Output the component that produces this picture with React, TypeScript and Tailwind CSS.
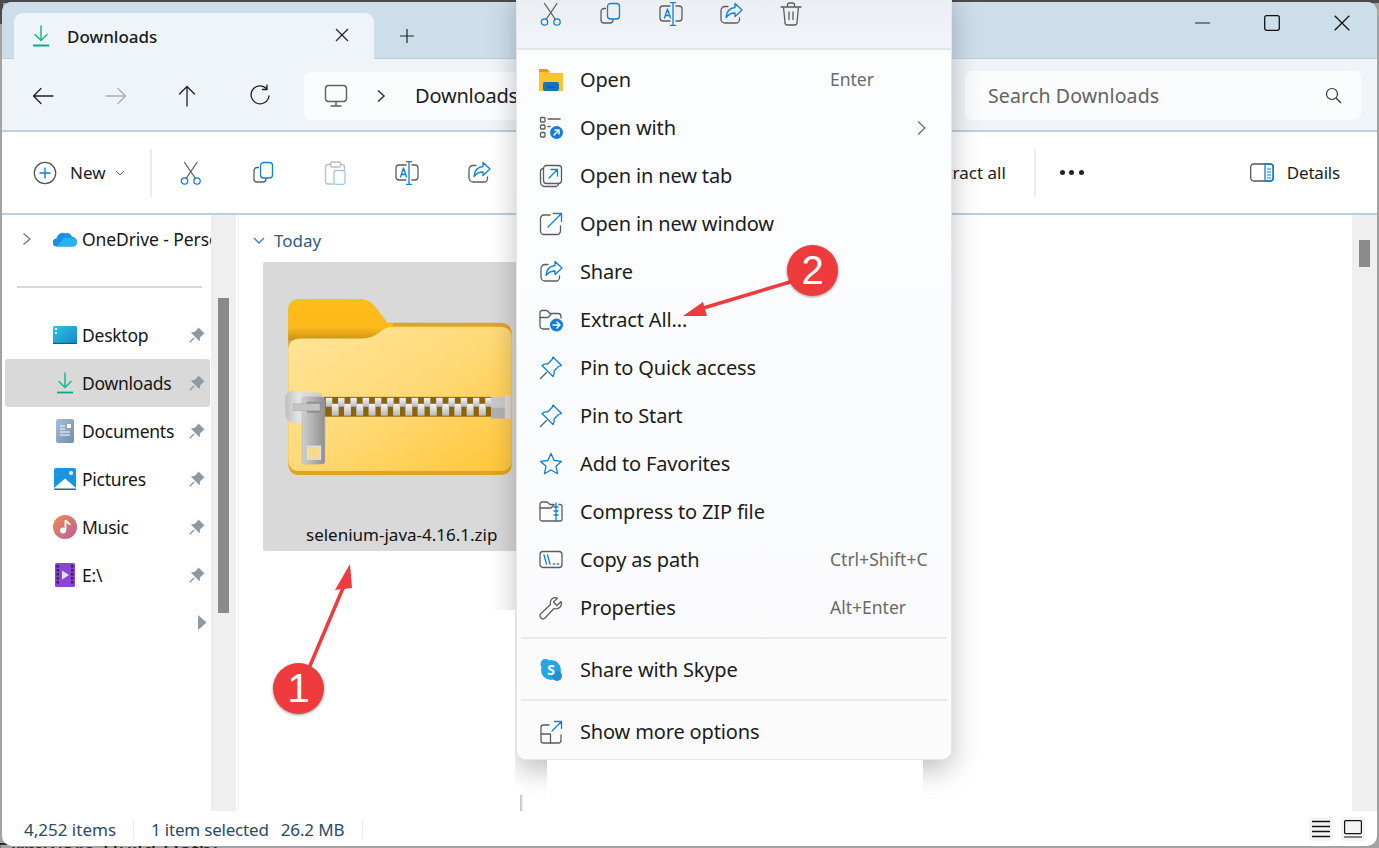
import React from "react";

const FONT = "font-['Noto_Sans','Open_Sans',sans-serif]";
const B = "#0f7fd8";
const G = "#5c5c5c";

function I({ children, s = 24, className = "" }: { children: React.ReactNode; s?: number; className?: string }) {
  return (
    <svg width={s} height={s} viewBox="0 0 24 24" fill="none" strokeWidth={1.3} strokeLinecap="round" strokeLinejoin="round" className={"shrink-0 " + className}>
      {children}
    </svg>
  );
}

const Cut = () => (
  <I>
    <circle cx="5.500" cy="20" r="3.200" stroke={B} />
    <circle cx="18" cy="20" r="3.200" stroke={B} />
    <path d="M7 17.500 18 1.500M16.500 17.500 5.500 1.500" stroke={G} />
  </I>
);
const Copy = () => (
  <I>
    <path d="M6.500 6.500H5A3 3 0 0 0 2 9.500V18a3 3 0 0 0 3 3h6a3 3 0 0 0 3-3v-.5" stroke={G} />
    <rect x="8.500" y="1.500" width="12" height="15.500" rx="3" stroke={B} />
  </I>
);
const Rename = () => (
  <I>
    <path d="M11 4H4a3 3 0 0 0-3 3v9a3 3 0 0 0 3 3h7M17 4h3a3 3 0 0 1 3 3v9a3 3 0 0 1-3 3h-3" stroke={G} />
    <path d="M11.500 .5h5M14 .5v23M11.500 23.500h5M5.500 16l3-9 3 9M6.500 13.500h4" stroke={B} />
  </I>
);
const Share = () => (
  <I>
    <path d="M9 4.500H6a4 4 0 0 0-4 4V17a4 4 0 0 0 4 4h11a3.500 3.500 0 0 0 3.500-3.500V16" stroke={G} />
    <path d="M16 1.500 23 8l-7 6.500V11c-4 0-6.500 1-9 4.500C7.500 10 10.500 6 16 5.500z" stroke={B} />
  </I>
);
const Trash = () => (
  <I>
    <path d="M2 5h20M8.500 5V3a2 2 0 0 1 2-2h3a2 2 0 0 1 2 2v2M4.500 5l1.500 15.500A2.500 2.500 0 0 0 8.500 23h7a2.500 2.500 0 0 0 2.500-2.500L19.500 5M10 10v7.500M14 10v7.500" stroke={G} />
  </I>
);
const Paste = () => (
  <I className="opacity-40">
    <path d="M7 3.500H4A2.500 2.500 0 0 0 1.500 6v14.500A2.500 2.500 0 0 0 4 23h5" stroke={G} />
    <rect x="6.500" y="1" width="10" height="5" rx="1.500" stroke={G} />
    <path d="M17 3.500h1a2.500 2.500 0 0 1 2.500 2.500v3" stroke={G} />
    <rect x="10" y="9.500" width="11" height="14" rx="2.500" stroke={B} />
  </I>
);
const Pin = () => (
  <I>
    <path d="M14 2 22.500 10.500 19.500 11.500 15 16c.5 2 .2 4-1 5.500L3 10.500C4.500 9 6.500 8.500 8.500 9L13 4.500z" stroke={B} transform="translate(0 -1)" />
    <path d="M7.500 16.500 1.500 22.500" stroke={G} />
  </I>
);

function Arrow({ d, dim }: { d: string; dim?: boolean }) {
  return (
    <svg width="24" height="24" viewBox="0 0 24 24" fill="none" stroke={dim ? "#a9adb1" : "#1f1f1f"} strokeWidth="1.300" strokeLinecap="round" strokeLinejoin="round" className="shrink-0">
      <path d={d} />
    </svg>
  );
}

function PinGray() {
  return (
    <svg width="16" height="16" viewBox="0 0 16 16" fill="#8d9aa5" className="shrink-0">
      <path d="M9.500 .5 15.500 6.500 14 7.500 11 10.500c.3 1.300 0 2.500-.8 3.500L2 5.800C3 5 4.200 4.700 5.500 5L8.500 2z" />
      <path d="M5 11 .8 15.200" stroke="#8d9aa5" strokeWidth="1.400" />
    </svg>
  );
}

const DownloadIcon = () => (
  <svg width="18" height="22" viewBox="0 0 18 22" fill="none" className="shrink-0">
    <path d="M9 1v14M3 9.500l6 6 6-6" stroke="#1fb58f" strokeWidth="1.500" strokeLinecap="round" strokeLinejoin="round" />
    <path d="M1 20.500h16" stroke="#12a68a" strokeWidth="1.800" />
  </svg>
);

function SideItem({ label, icon, active }: { label: string; icon: React.ReactNode; active?: boolean }) {
  return (
    <div className={"flex items-center h-[48px] ml-[3px] mr-[1px] pl-[48px] pr-[5px] rounded-[3px] " + (active ? "bg-[#d9d9d9]" : "")}>
      <div className="w-[24px] flex justify-center mr-[5px]">{icon}</div>
      <span className="flex-1 text-[17.500px] text-[#161616] tracking-[-0.25px]">{label}</span>
      <PinGray />
    </div>
  );
}

const DesktopIcon = () => (
  <svg width="24" height="18" viewBox="0 0 24 18" className="shrink-0">
    <defs>
      <linearGradient id="dk" x1="0" y1="0" x2="1" y2="1">
        <stop offset="0" stopColor="#2fc3de" />
        <stop offset="1" stopColor="#1787c9" />
      </linearGradient>
    </defs>
    <rect width="24" height="18" rx="1.500" fill="url(#dk)" />
    <rect x="0" y="16.800" width="24" height="1.200" fill="#0d5e95" />
    <rect x="2" y="2" width="2" height="2" fill="#fff" />
    <rect x="2" y="6" width="2" height="2" fill="#bdeefc" />
  </svg>
);
const DocIcon = () => (
  <svg width="18" height="24" viewBox="0 0 18 24" className="shrink-0">
    <defs>
      <linearGradient id="dc" x1="0" y1="0" x2="1" y2="1">
        <stop offset="0" stopColor="#a8c0da" />
        <stop offset="1" stopColor="#6f8cab" />
      </linearGradient>
    </defs>
    <rect width="18" height="24" rx="2" fill="url(#dc)" />
    <path d="M4 7h5M4 10h5M4 13h10M4 16h10" stroke="#fff" strokeWidth="1.100" />
    <rect x="11" y="5" width="4" height="4" fill="#fff" />
  </svg>
);
const PicIcon = () => (
  <svg width="22" height="22" viewBox="0 0 22 22" className="shrink-0">
    <rect width="22" height="22" rx="2" fill="#1a94e0" />
    <circle cx="17" cy="5" r="2" fill="#fff" />
    <path d="M0 20 11 10.500 22 20v.5a1.500 1.500 0 0 1-1.500 1.500h-19A1.500 1.500 0 0 1 0 20.500z" fill="#fff" />
    <path d="M0 20.500h22V21a1 1 0 0 1-1 1H1a1 1 0 0 1-1-1z" fill="#0f6cb8" />
  </svg>
);
const MusicIcon = () => (
  <svg width="24" height="24" viewBox="0 0 24 24" className="shrink-0">
    <defs>
      <linearGradient id="mu" x1="0" y1="0" x2="1" y2="1">
        <stop offset="0" stopColor="#f08b4d" />
        <stop offset="1" stopColor="#b85f9f" />
      </linearGradient>
    </defs>
    <circle cx="12" cy="12" r="12" fill="url(#mu)" />
    <path d="M12.500 5v10" stroke="#fff" strokeWidth="1.800" />
    <circle cx="10" cy="15.500" r="3" fill="#fff" />
    <path d="M12.500 5c1 2.500 3.500 2.500 4.500 5" stroke="#fff" strokeWidth="1.800" fill="none" />
  </svg>
);
const VideoIcon = () => (
  <svg width="20" height="24" viewBox="0 0 20 24" className="shrink-0">
    <rect width="20" height="24" rx="1.500" fill="#8b45d6" />
    <path d="M7 7.500v9l7-4.500z" fill="#eadcfb" />
    {[2, 6, 10, 14, 18].map((y) => (
      <g key={y}>
        <rect x="1.500" y={y} width="2.500" height="2.500" fill="#3b1a70" />
        <rect x="16" y={y} width="2.500" height="2.500" fill="#3b1a70" />
      </g>
    ))}
  </svg>
);

function Zip() {
  const top: number[] = [];
  for (let i = 0; i < 14; i++) top.push(i);
  return (
    <svg width="224" height="176" viewBox="0 0 226 178" className="block shrink-0 overflow-visible">
      <defs>
        <linearGradient id="fb" x1="0" y1="0" x2="1" y2="1">
          <stop offset="0" stopColor="#ffe59a" />
          <stop offset="0.5" stopColor="#ffd976" />
          <stop offset="1" stopColor="#ffc636" />
        </linearGradient>
        <linearGradient id="tb" x1="0" y1="0" x2="0" y2="1">
          <stop offset="0" stopColor="#ffbf1c" />
          <stop offset="0.7" stopColor="#fbb81a" />
          <stop offset="1" stopColor="#c98f14" />
        </linearGradient>
        <linearGradient id="sl" x1="0" y1="0" x2="1" y2="0">
          <stop offset="0" stopColor="#cfcfcf" />
          <stop offset="1" stopColor="#8f8f8f" />
        </linearGradient>
        <linearGradient id="tl" x1="0" y1="0" x2="1" y2="0">
          <stop offset="0" stopColor="#bdbdbd" />
          <stop offset="0.35" stopColor="#e4e4e4" />
          <stop offset="1" stopColor="#c9c9c9" />
        </linearGradient>
        <linearGradient id="tt" x1="0" y1="0" x2="0" y2="1">
          <stop offset="0" stopColor="#f5f5f5" />
          <stop offset="1" stopColor="#b9b9b9" />
        </linearGradient>
      </defs>
      <path d="M0 12Q0 0 12 0H71Q82 0 88 8L100 24H214Q226 24 226 36V166Q226 178 214 178H12Q0 178 0 166Z" fill="#e2a327" />
      <path d="M0 12Q0 0 12 0H71Q82 0 88 8L100 24H106V42H0Z" fill="url(#tb)" />
      <path d="M0 52Q0 40 12 40H75Q84 40 92 34Q98 28 106 28H214Q226 28 226 40V162Q226 174 214 174H12Q0 174 0 162Z" fill="url(#fb)" />
      <rect x="36" y="99" width="170" height="20" fill="#8a6408" />
      {top.map((i) => (
        <rect key={"b" + i} x={44 + i * 12.400} y="106" width="7" height="12" fill="url(#tt)" />
      ))}
      {top.map((i) => (
        <rect key={"t" + i} x={38 + i * 12.400} y="100" width="6.500" height="9" fill="url(#tt)" />
      ))}
      <rect x="205" y="99" width="16" height="11" fill="#c9c9c9" />
      <rect x="205" y="110" width="16" height="11" fill="#b2b2b2" />
      <rect x="219" y="97" width="6" height="24" fill="#d9d9d9" />
      <path d="M-3 99Q-2 94 4 93L34 95V122L6 126Q-3 124 -3 116Z" fill="url(#tl)" />
      <rect x="14" y="99" width="23" height="68" rx="3" fill="url(#sl)" stroke="#a8a8a8" strokeWidth=".5" />
      <rect x="19" y="104" width="14" height="11" fill="#8e8e8e" />
      <rect x="5" y="106" width="27" height="7" fill="#c4c4c4" stroke="#aaa" strokeWidth=".5" />
      <rect x="19.500" y="149" width="13" height="13" fill="#f6d98a" stroke="#dedede" strokeWidth="1.500" />
    </svg>
  );
}

function MenuRow({ icon, label, hint, chev }: { icon: React.ReactNode; label: string; hint?: string; chev?: boolean }) {
  return (
    <div className="flex items-center h-[48px] pl-[22px] pr-[21px]">
      <div className="w-[24px] flex justify-center mr-[17px]">{icon}</div>
      <span className="flex-1 text-[20px] text-[#1c1c1c] tracking-[-0.15px]">{label}</span>
      {hint && <span className="text-[17.500px] text-[#6a6a6a] w-[100px] whitespace-nowrap pb-[2px]">{hint}</span>}
      {chev && (
        <svg width="12" height="16" viewBox="0 0 12 16" fill="none" stroke="#6a6a6a" strokeWidth="1.200" className="mr-[3px]">
          <path d="M3 1.500 10 8l-7 6.500" />
        </svg>
      )}
    </div>
  );
}

function ContextMenu() {
  return (
    <div className="absolute left-[516px] top-[-14px] w-[436px] h-[774px] rounded-[10px] bg-[#fbfcfe] border border-[#e4e6e9] shadow-[0_10px_28px_rgba(0,0,0,0.25)] overflow-hidden">
      <div className="h-[63px] bg-gradient-to-b from-[#e9edf1] to-[#f1f4f8] border-b-[2px] border-[#e4e7ea] flex items-start pt-[15px] pl-[22px] gap-[36px]">
        <Cut />
        <Copy />
        <Rename />
        <Share />
        <Trash />
      </div>
      <div className="h-[709px] pt-[6px] bg-gradient-to-b from-[#fbfdff] to-[#fbfbfc]">
        <MenuRow label="Open" hint="Enter" icon={
          <svg width="24" height="22" viewBox="0 0 24 22">
            <path d="M0 1h9l2 3h13v18H0z" fill="#fdc52b" />
            <path d="M0 0h8l3 3H0z" fill="#e09c14" />
            <rect x="4" y="13" width="16" height="9" rx="2" fill="#1075c5" />
            <path d="M8 18h8" stroke="#0a4d8c" strokeWidth="1" />
          </svg>
        } />
        <MenuRow label="Open with" chev icon={
          <I>
            <rect x="1.500" y="1.500" width="4.500" height="4.500" rx="1" stroke={G} />
            <rect x="1.500" y="9" width="4.500" height="4" rx="1" stroke={G} />
            <rect x="1.500" y="16.500" width="4.500" height="4.500" rx="1" stroke={G} />
            <path d="M9 3h12M9 10.500h2" stroke={G} />
            <circle cx="17.500" cy="16.500" r="6.500" fill={B} />
            <path d="M15 19l5-5M16 14h4v4" stroke="#fff" strokeWidth="1.500" />
          </I>
        } />
        <MenuRow label="Open in new tab" icon={
          <I>
            <path d="M4 4.500a3 3 0 0 0-2.500 3V18A4.500 4.500 0 0 0 6 22.500h10.500a3 3 0 0 0 3-2.500" stroke={G} />
            <rect x="4.500" y="1.500" width="18" height="18" rx="3" stroke={G} />
            <path d="M10 14l8-8M12 5.500h6.500V12" stroke={B} />
          </I>
        } />
        <MenuRow label="Open in new window" icon={
          <I>
            <path d="M11 3H5a3.500 3.500 0 0 0-3.500 3.500V19A3.500 3.500 0 0 0 5 22.500h13a3.500 3.500 0 0 0 3.500-3.500V14" stroke={G} />
            <path d="M9 15 22 2M14.500 1.500H22.500V9.500" stroke={B} />
          </I>
        } />
        <MenuRow label="Share" icon={<Share />} />
        <MenuRow label="Extract All..." icon={
          <I>
            <path d="M10 21H4a3 3 0 0 1-3-3V4.500a2 2 0 0 1 2-2h5l3 3h8a3 3 0 0 1 3 3V10" stroke={G} />
            <path d="M1 9.500h8l3-3" stroke={G} />
            <circle cx="17.500" cy="17" r="6.500" fill={B} />
            <path d="M14 17h7M18 14l3 3-3 3" stroke="#fff" strokeWidth="1.500" />
          </I>
        } />
        <MenuRow label="Pin to Quick access" icon={<Pin />} />
        <MenuRow label="Pin to Start" icon={<Pin />} />
        <MenuRow label="Add to Favorites" icon={
          <I>
            <path d="M12 1.500l3.200 7 7.300.8-5.500 5 1.600 7.400L12 18l-6.600 3.700L7 14.300l-5.500-5 7.300-.8z" stroke={B} />
          </I>
        } />
        <MenuRow label="Compress to ZIP file" icon={
          <I>
            <path d="M20 4.500h1a2 2 0 0 1 2 2V19a2 2 0 0 1-2 2H3a2 2 0 0 1-2-2V4a2 2 0 0 1 2-2h5l3 2.500h4" stroke={G} />
            <path d="M1 8h11l3-3" stroke={G} />
            <path d="M17 3v18M15 7h4M15 11h4M15 15h4" stroke={B} />
          </I>
        } />
        <MenuRow label="Copy as path" hint="Ctrl+Shift+C" icon={
          <I>
            <rect x="1" y="3.500" width="22" height="16" rx="3" stroke={G} />
            <path d="M5 7l2.500 9M8.500 7l2.500 9" stroke={B} />
            <path d="M14.500 16h1M18.500 16h1" stroke={B} strokeWidth="1.600" />
          </I>
        } />
        <MenuRow label="Properties" hint="Alt+Enter" icon={
          <I>
            <path d="M22 5.500 18 9.500 14.500 6 18.500 2C14.500 .5 10.500 3.500 11.500 8.500L2 17.500A2.800 2.800 0 0 0 6 22l9-9.500C20 14 23.500 10 22 5.500Z" stroke={G} />
          </I>
        } />
        <div className="h-[2px] bg-[#e9eaeb] mx-[4px] mt-[5px]" />
        <div className="pt-[7px]">
          <MenuRow label="Share with Skype" icon={
            <svg width="24" height="24" viewBox="0 0 24 24">
              <circle cx="12" cy="12" r="10" fill="#25a5e2" />
              <circle cx="6.500" cy="6" r="5" fill="#25a5e2" />
              <circle cx="18" cy="18" r="5" fill="#1f8fd0" />
              <text x="12" y="17" textAnchor="middle" fontSize="14" fontWeight="700" fill="#fff" fontFamily="Noto Sans">S</text>
            </svg>
          } />
        </div>
        <div className="h-[2px] bg-[#e9eaeb] mx-[4px] mt-[5px]" />
        <div className="pt-[7px]">
          <MenuRow label="Show more options" icon={
            <I>
              <path d="M10 5H4.500A2.500 2.500 0 0 0 2 7.500v13A2.500 2.500 0 0 0 4.500 23h15a2.500 2.500 0 0 0 2.500-2.500V15" stroke={G} />
              <path d="M2 14h9.500v9" stroke={G} />
              <path d="M13 11 22 2M15.500 1.500h7v7" stroke={B} />
            </I>
          } />
        </div>
      </div>
    </div>
  );
}

function Callout({ n, className }: { n: string; className: string }) {
  return (
    <div className={"absolute w-[51px] h-[51px] rounded-full bg-[#ef3b3e] shadow-[0_1px_3px_rgba(0,0,0,0.4)] text-white text-[40px] font-medium leading-[51px] text-center font-['Liberation_Sans',sans-serif] " + className}>
      {n}
    </div>
  );
}

export default function App() {
  return (
    <div className={"relative w-[1379px] h-[848px] overflow-hidden bg-[#a3a3a3] p-[2px] " + FONT}>
      <div className="absolute left-0 right-0 top-0 h-[3px] bg-[#4b4b4b]" />
      <div className="absolute left-0 top-0 w-[3px] h-[24px] bg-[#4b4b4b]" />
      <div className="absolute left-[-4px] top-[843px] text-[24px] leading-[18px] text-[#222] font-['Liberation_Sans',sans-serif] whitespace-nowrap">Firmware Build Path:</div>

      <div className="relative h-[844px] rounded-[10px] bg-white overflow-hidden flex flex-col">
        {/* title strip */}
        <div className="h-[57px] bg-[#cddeeb] border-b border-[#bfd0de] flex items-end pl-[12px] relative shrink-0">
          <div className="w-[360px] h-[46px] -mb-[1px] bg-[#eff4f9] rounded-t-[9px] flex items-center pl-[18px]">
            <DownloadIcon />
            <span className="ml-[17px] text-[17px] font-medium text-[#1a1a1a] pt-[1px]">Downloads</span>
            <svg width="14" height="14" viewBox="0 0 14 14" stroke="#222" strokeWidth="1.200" className="ml-[178px] mb-[2px]"><path d="M1 1l12 12M13 1 1 13" /></svg>
          </div>
          <svg width="16" height="16" viewBox="0 0 16 16" stroke="#222" strokeWidth="1.200" className="ml-[25px] mb-[14px]"><path d="M8 1v14M1 8h14" /></svg>
          <div className="ml-auto flex items-center gap-[54px] pr-[27px] self-start pt-[13px]">
            <svg width="16" height="16" viewBox="0 0 16 16" stroke="#222" strokeWidth="1.100"><path d="M1 8h15" /></svg>
            <svg width="16" height="16" viewBox="0 0 16 16" fill="none" stroke="#111" strokeWidth="1.300"><rect x=".7" y=".7" width="14.600" height="14.600" rx="2" /></svg>
            <svg width="16" height="16" viewBox="0 0 16 16" stroke="#111" strokeWidth="1.300"><path d="M.7.7l14.600 14.600M15.300.7.700 15.300" /></svg>
          </div>
        </div>

        {/* nav */}
        <div className="h-[73px] bg-[#eff4f9] border-b-[2px] border-[#bfcfdc] shrink-0 flex items-center pl-[29px] pt-[2px]">
          <Arrow d="M22 12H3M10 4.500 2.500 12l7.500 7.500" />
          <div className="ml-[49px]"><Arrow dim d="M2 12h19M14 4.500l7.500 7.500L14 19.500" /></div>
          <div className="ml-[47px]"><Arrow d="M12 22V3M4.500 10 12 2.500l7.500 7.500" /></div>
          <div className="ml-[49px]"><Arrow d="M18.500 4.500A9 9 0 1 0 21 12M19 1v4.500h-4.500" /></div>
          <div className="ml-[32px] w-[250px] h-[48px] bg-[#fbfcfe] rounded-l-[6px] flex items-center pl-[20px] overflow-hidden">
            <svg width="24" height="24" viewBox="0 0 24 24" fill="none" stroke="#5f5f5f" strokeWidth="1.400" className="shrink-0"><rect x="1.500" y="1.500" width="21" height="16" rx="3" /><path d="M12 17.500V22M6.500 22h11" /></svg>
            <svg width="10" height="14" viewBox="0 0 10 14" fill="none" stroke="#333" strokeWidth="1.500" className="ml-[28px] shrink-0"><path d="M2 1.500 8 7l-6 5.500" /></svg>
            <span className="ml-[29px] text-[20px] text-[#1c1c1c] tracking-[-0.2px] whitespace-nowrap">Downloads</span>
          </div>
          <div className="ml-auto mr-[16px] w-[396px] h-[49px] bg-[#fbfcfe] rounded-[6px] flex items-center pl-[23px] pr-[19px]">
            <span className="flex-1 text-[19.500px] text-[#626262] tracking-[0.15px]">Search Downloads</span>
            <svg width="17" height="17" viewBox="0 0 17 17" fill="none" stroke="#333" strokeWidth="1.200"><circle cx="7" cy="7" r="5.500" /><path d="M11 11l5 5" /></svg>
          </div>
        </div>

        {/* toolbar */}
        <div className="h-[83px] bg-white border-b-[2px] border-[#bfcfdc] shrink-0 flex items-center pl-[31px]">
          <svg width="24" height="24" viewBox="0 0 24 24" fill="none" className="shrink-0">
            <circle cx="12" cy="12" r="10.700" stroke="#555" strokeWidth="1.300" />
            <path d="M12 6.500v11M6.500 12h11" stroke={B} strokeWidth="1.400" />
          </svg>
          <span className="ml-[13px] text-[17px] text-[#1c1c1c] w-[35px]">New</span>
          <svg width="10" height="6" viewBox="0 0 10 6" fill="none" stroke="#666" strokeWidth="1" className="ml-[10px]"><path d="M1 1l4 4 4-4" /></svg>
          <div className="w-[2px] h-[48px] bg-[#ececec] ml-[25px]" />
          <div className="ml-[27px]"><Cut /></div>
          <div className="ml-[49px]"><Copy /></div>
          <div className="ml-[48px]"><Paste /></div>
          <div className="ml-[47px]"><Rename /></div>
          <div className="ml-[48px]"><Share /></div>
          <div className="ml-auto flex items-center">
            <span className="text-[17px] text-[#1c1c1c]">Extract all</span>
            <div className="w-[2px] h-[48px] bg-[#ececec] ml-[28px]" />
            <div className="ml-[24px] flex gap-[4.500px]">
              <div className="w-[5px] h-[5px] rounded-full bg-[#222]" />
              <div className="w-[5px] h-[5px] rounded-full bg-[#222]" />
              <div className="w-[5px] h-[5px] rounded-full bg-[#222]" />
            </div>
            <svg width="24" height="19" viewBox="0 0 24 19" fill="none" className="ml-[166px]">
              <rect x=".7" y="1" width="22.600" height="17" rx="3" stroke="#555" strokeWidth="1.300" />
              <path d="M15 1h5a3 3 0 0 1 3 3v11a3 3 0 0 1-3 3h-5z" stroke={B} strokeWidth="1.300" />
              <path d="M17 6h4M17 9h4M17 12h4M17 15h4" stroke={B} />
            </svg>
            <span className="ml-[13px] mr-[37px] text-[17px] text-[#1c1c1c] tracking-[-0.2px]">Details</span>
          </div>
        </div>

        {/* body */}
        <div className="flex flex-1 min-h-0">
          <div className="w-[209px] shrink-0 overflow-hidden">
            <div className="flex items-center h-[48px] pl-[20px]">
              <svg width="10" height="14" viewBox="0 0 10 14" fill="none" stroke="#777" strokeWidth="1.300" className="shrink-0"><path d="M1.500 1.500 8 7l-6.500 5.500" /></svg>
              <svg width="24" height="16" viewBox="0 0 24 16" className="ml-[21px] shrink-0">
                <path d="M4 15.500A4 4 0 0 1 3.500 7.500C4.500 3 9 .5 12.500 2.500 15 1 18.500 3 19 6c3 0 5 2 5 5s-2.500 4.500-4 4.500z" fill="#1b8fe6" />
                <path d="M4 15.500 11 7c3-1 6 0 8 0 3 0 5 2 5 4.500S21.500 15.500 20 15.500z" fill="#2cb0ee" />
              </svg>
              <span className="ml-[5px] text-[17.500px] text-[#161616] whitespace-nowrap tracking-[-0.1px]">OneDrive - Personal</span>
            </div>
            <div className="h-[2px] bg-[#d8d8d8] ml-[15px] mr-[9px] mt-[23px] mb-[23px]" />
            <SideItem label="Desktop" icon={<DesktopIcon />} />
            <SideItem label="Downloads" active icon={<DownloadIcon />} />
            <SideItem label="Documents" icon={<DocIcon />} />
            <SideItem label="Pictures" icon={<PicIcon />} />
            <SideItem label="Music" icon={<MusicIcon />} />
            <SideItem label="E:\" icon={<VideoIcon />} />
            <div className="flex justify-end pr-[5px] pt-[16px]">
              <svg width="8" height="15" viewBox="0 0 8 15" fill="#8d9aa5"><path d="M0 0 8 7v1L0 15z" /></svg>
            </div>
          </div>
          <div className="w-[25px] bg-[#efefef] shrink-0 pt-[83px] flex justify-center">
            <div className="w-[11px] h-[315px] bg-[#8a8a8a]" />
          </div>
          <div className="w-[3px] shrink-0 border-r border-[#f0f0f0]" />
          <div className="flex-1 min-w-0 pl-[14px] pt-[12px]">
            <div className="flex items-center h-[28px]">
              <svg width="12" height="8" viewBox="0 0 12 8" fill="none" stroke="#3f7fb0" strokeWidth="1.300"><path d="M1 1l5 5 5-5" /></svg>
              <span className="ml-[9px] text-[17px] text-[#2f5c80]">Today</span>
            </div>
            <div className="ml-[10px] mt-[7px] w-[260px] h-[289px] bg-[#d9d9d9] rounded-[2px] flex flex-col">
              <div className="pl-[25px] pt-[37px]"><Zip /></div>
              <div className="mt-[47px] pl-[43px] text-[17px] text-[#111] whitespace-nowrap">selenium-java-4.16.1.zip</div>
            </div>
          </div>
          <div className="w-[25px] bg-[#efefef] shrink-0 pt-[25px] flex justify-center">
            <div className="w-[11px] h-[27px] bg-[#8a8a8a]" />
          </div>
        </div>

        {/* status */}
        <div className="h-[35px] shrink-0 flex items-center pl-[22px] text-[17px] text-[#2b4a66]">
          <div className="flex items-center pt-[3px]">
            <span>4,252 items</span>
            <div className="w-[1px] h-[18px] bg-[#ececec] ml-[17px]" />
            <span className="ml-[17px] tracking-[-0.2px]">1 item selected</span>
            <span className="ml-[12px] tracking-[-0.1px]">26.2 MB</span>
            <div className="w-[1px] h-[18px] bg-[#ececec] ml-[17px]" />
          </div>
          <div className="ml-auto flex items-center gap-[8px] pr-[12px]">
            <div className="w-[24px] h-[24px] bg-[#f4f4f4] rounded-[3px] flex items-center justify-center">
              <svg width="18" height="18" viewBox="0 0 18 18" stroke="#111" strokeWidth="1.300"><path d="M0 1.500h18M0 6.500h18M0 11.500h18M0 16.500h18" /></svg>
            </div>
            <div className="w-[24px] h-[24px] bg-[#f4f4f4] rounded-[3px] flex items-center justify-center">
              <svg width="18" height="18" viewBox="0 0 18 18" fill="none" stroke="#111" strokeWidth="1.200"><rect x=".6" y=".6" width="16.800" height="13" rx="1" /><path d="M0 17h18" /></svg>
            </div>
          </div>
        </div>
      </div>

      {/* overlays */}
      <ContextMenu />
      <div className="absolute left-[547px] top-[760px] w-[376px] h-[51px] bg-white" />
      <div className="absolute left-[470px] top-[610px] w-[45px] h-[201px] bg-white" />
      <div className="absolute left-[515px] top-[785px] w-[8px] h-[26px] bg-white flex justify-end items-end">
        <div className="w-[3px] h-[16px] bg-gradient-to-r from-[#bdbdbd] to-[#f2f2f2]" />
      </div>
      <svg width="1379" height="848" className="absolute left-0 top-0 pointer-events-none">
        <path d="M309 668 349 574" stroke="#ef3b3e" strokeWidth="3.500" />
        <path d="M350 564 335 590 352 588z" fill="#ef3b3e" />
        <path d="M790 282 700 309" stroke="#ef3b3e" strokeWidth="3.500" />
        <path d="M683 316 703 302 707 316z" fill="#ef3b3e" />
      </svg>
      <Callout n="1" className="left-[273px] top-[663px]" />
      <Callout n="2" className="left-[787px] top-[245px]" />
    </div>
  );
}
